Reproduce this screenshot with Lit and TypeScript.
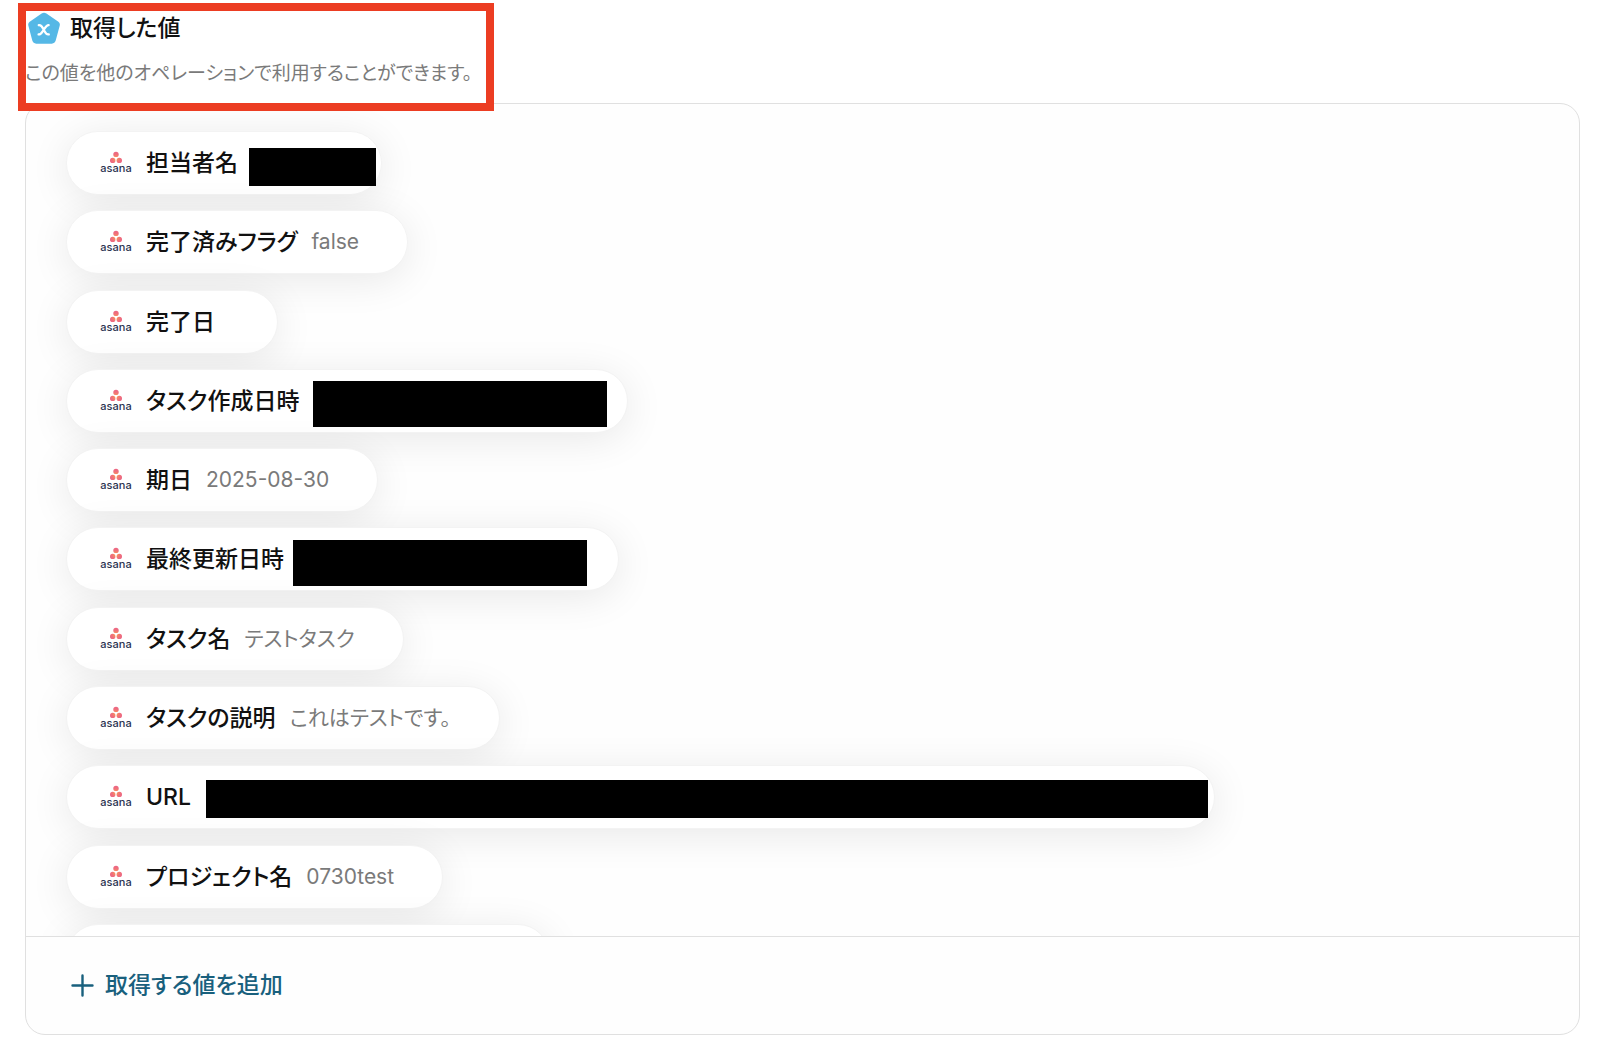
import { LitElement, html, css, nothing } from "lit";
import { customElement, property } from "lit/decorators.js";
import { styleMap } from "lit/directives/style-map.js";

interface Mask {
  left: number;
  top: number;
  width: number;
  height: number;
}

interface Item {
  label?: string;
  value?: string;
  width?: number;
  mask?: Mask;
}

const ITEMS: Item[] = [
  { label: "担当者名", width: 316, mask: { left: 182, top: 16, width: 127, height: 38 } },
  { label: "完了済みフラグ", value: "false" },
  { label: "完了日" },
  { label: "タスク作成日時", width: 562, mask: { left: 246, top: 11, width: 294, height: 46 } },
  { label: "期日", value: "2025-08-30" },
  { label: "最終更新日時", width: 553, mask: { left: 226, top: 12, width: 294, height: 46 } },
  { label: "タスク名", value: "テストタスク" },
  { label: "タスクの説明", value: "これはテストです。" },
  { label: "URL", width: 1149, mask: { left: 139, top: 14, width: 1002, height: 38 } },
  { label: "プロジェクト名", value: "0730test" },
  { width: 484 },
];

@customElement("asana-logo")
class AsanaLogo extends LitElement {
  static styles = css`
    :host { display: block; flex: none; width: 32px; height: 32px; }
    .logo { display: block; width: 32px; height: 32px; overflow: visible; }
    .word { font: 500 11px Inter, sans-serif; fill: #2b3350; }
  `;
  render() {
    return html`<svg class="logo" viewBox="0 0 32 32" role="img" aria-label="asana">
      <defs>
        <radialGradient id="g" gradientUnits="userSpaceOnUse" cx="16" cy="11.5" r="8">
          <stop offset="0" stop-color="#f9a04f" />
          <stop offset="0.5" stop-color="#f0707a" />
          <stop offset="1" stop-color="#e9608a" />
        </radialGradient>
      </defs>
      <g fill="url(#g)">
        <circle cx="16" cy="7.4" r="2.7" />
        <circle cx="12.7" cy="13.4" r="2.7" />
        <circle cx="19.3" cy="13.4" r="2.7" />
      </g>
      <text class="word" x="16" y="25" text-anchor="middle">asana</text>
    </svg>`;
  }
}

@customElement("value-pill")
class ValuePill extends LitElement {
  @property({ attribute: false }) item!: Item;
  static styles = css`
    :host { display: block; }
    .pill {
      position: relative;
      box-sizing: border-box;
      display: flex;
      align-items: center;
      gap: 14px;
      height: 64px;
      padding: 0 48px 0 33px;
      border: 1px solid #f3f3f3;
      border-radius: 32px;
      background: #fff;
      box-shadow: 0 6px 40px rgba(0, 0, 0, 0.09);
      white-space: nowrap;
    }
    .label { font-size: 23px; font-weight: 500; line-height: 32px; color: #111; }
    .value { font-size: 21px; font-weight: 400; line-height: 32px; color: #7a7a7a; }
    .mask { position: absolute; background: #000; }
  `;
  render() {
    const { label, value, width, mask } = this.item;
    return html`<div class="pill" style=${width ? styleMap({ width: `${width}px` }) : nothing}>
      ${label
        ? html`<asana-logo></asana-logo>
            <span class="label">${label}</span>
            <span class="value">${value ?? ""}</span>`
        : nothing}
      ${mask
        ? html`<span class="mask" style=${styleMap({
            left: `${mask.left}px`,
            top: `${mask.top}px`,
            width: `${mask.width}px`,
            height: `${mask.height}px`,
          })}></span>`
        : nothing}
    </div>`;
  }
}

@customElement("app-root")
class AppRoot extends LitElement {
  static styles = css`
    :host {
      display: block;
      background: #fff;
      font-family: Inter, "Noto Sans CJK JP", sans-serif;
      font-feature-settings: "palt";
      color: #111;
    }
    .page {
      position: relative;
      box-sizing: border-box;
      display: flex;
      flex-direction: column;
      min-height: 100vh;
      padding: 12px 20px 11px 25px;
    }
    .head { display: flex; align-items: center; gap: 10px; padding-left: 3px; height: 32px; }
    .badge { width: 32px; height: 32px; flex: none; }
    .title { margin: 0; font-size: 23px; font-weight: 500; line-height: 32px; }
    .note { margin: 0; padding: 16px 0; font-size: 19px; font-weight: 400; line-height: 27px; color: #7a7a7a; }
    .frame {
      position: absolute;
      left: 18px;
      top: 3px;
      box-sizing: border-box;
      width: 476px;
      height: 108px;
      border: 8px solid #ec3d22;
      pointer-events: none;
    }
    .panel {
      flex: 1;
      display: flex;
      flex-direction: column;
      border: 1px solid #e0e0e0;
      border-radius: 20px;
      background: #fefefe;
    }
    .scroll { flex: 1 1 0; min-height: 0; overflow: hidden; border-radius: 20px 20px 0 0; }
    .list {
      display: flex;
      flex-direction: column;
      align-items: flex-start;
      justify-content: space-between;
      min-height: 857px;
      margin: 0;
      padding: 27px 40px 0;
      list-style: none;
    }
    .foot { border-top: 1px solid #e0e0e0; padding: 32px 45px 33px; }
    .add {
      display: flex;
      align-items: center;
      gap: 11px;
      padding: 0;
      border: 0;
      background: none;
      font: inherit;
      font-feature-settings: inherit;
      font-size: 23px;
      font-weight: 500;
      line-height: 32px;
      color: #19607d;
      cursor: pointer;
    }
    .plus { width: 23px; height: 23px; flex: none; }
  `;
  render() {
    return html`<main class="page">
      <header class="head">
        <svg class="badge" viewBox="0 0 32 32" aria-hidden="true">
          <path
            fill="#55b8e6"
            d="M13.6 1.6 Q16 0 18.4 1.6 L30.4 9.8 Q32.4 11.3 31.7 13.8 L27.7 28.6 Q26.8 31.6 23.8 31.7 H8.2 Q5.2 31.6 4.3 28.6 L.4 13.8 Q-.3 11.3 1.7 9.8 Z"
          />
          <path
            fill="none"
            stroke="#fff"
            stroke-width="2.3"
            stroke-linecap="round"
            d="M10.8 13.2 C13.6 12.6 14.2 15 15.7 17.8 C17.2 20.6 18 23 20.8 22.4 M20.6 13.2 C18.6 13 17.4 15.4 15.7 17.8 C14 20.2 12.8 22.8 10.6 22.4"
          />
        </svg>
        <h1 class="title">取得した値</h1>
      </header>
      <p class="note">この値を他のオペレーションで利用することができます。</p>
      <section class="panel">
        <div class="scroll">
          <ul class="list">
            ${ITEMS.map((item) => html`<li><value-pill .item=${item}></value-pill></li>`)}
          </ul>
        </div>
        <div class="foot">
          <button class="add" type="button">
            <svg class="plus" viewBox="0 0 23 23" aria-hidden="true">
              <path d="M11.5 1.5 V21.5 M1.5 11.5 H21.5" stroke="#19607d" stroke-width="2.4" stroke-linecap="round" />
            </svg>
            取得する値を追加
          </button>
        </div>
      </section>
      <div class="frame"></div>
    </main>`;
  }
}
